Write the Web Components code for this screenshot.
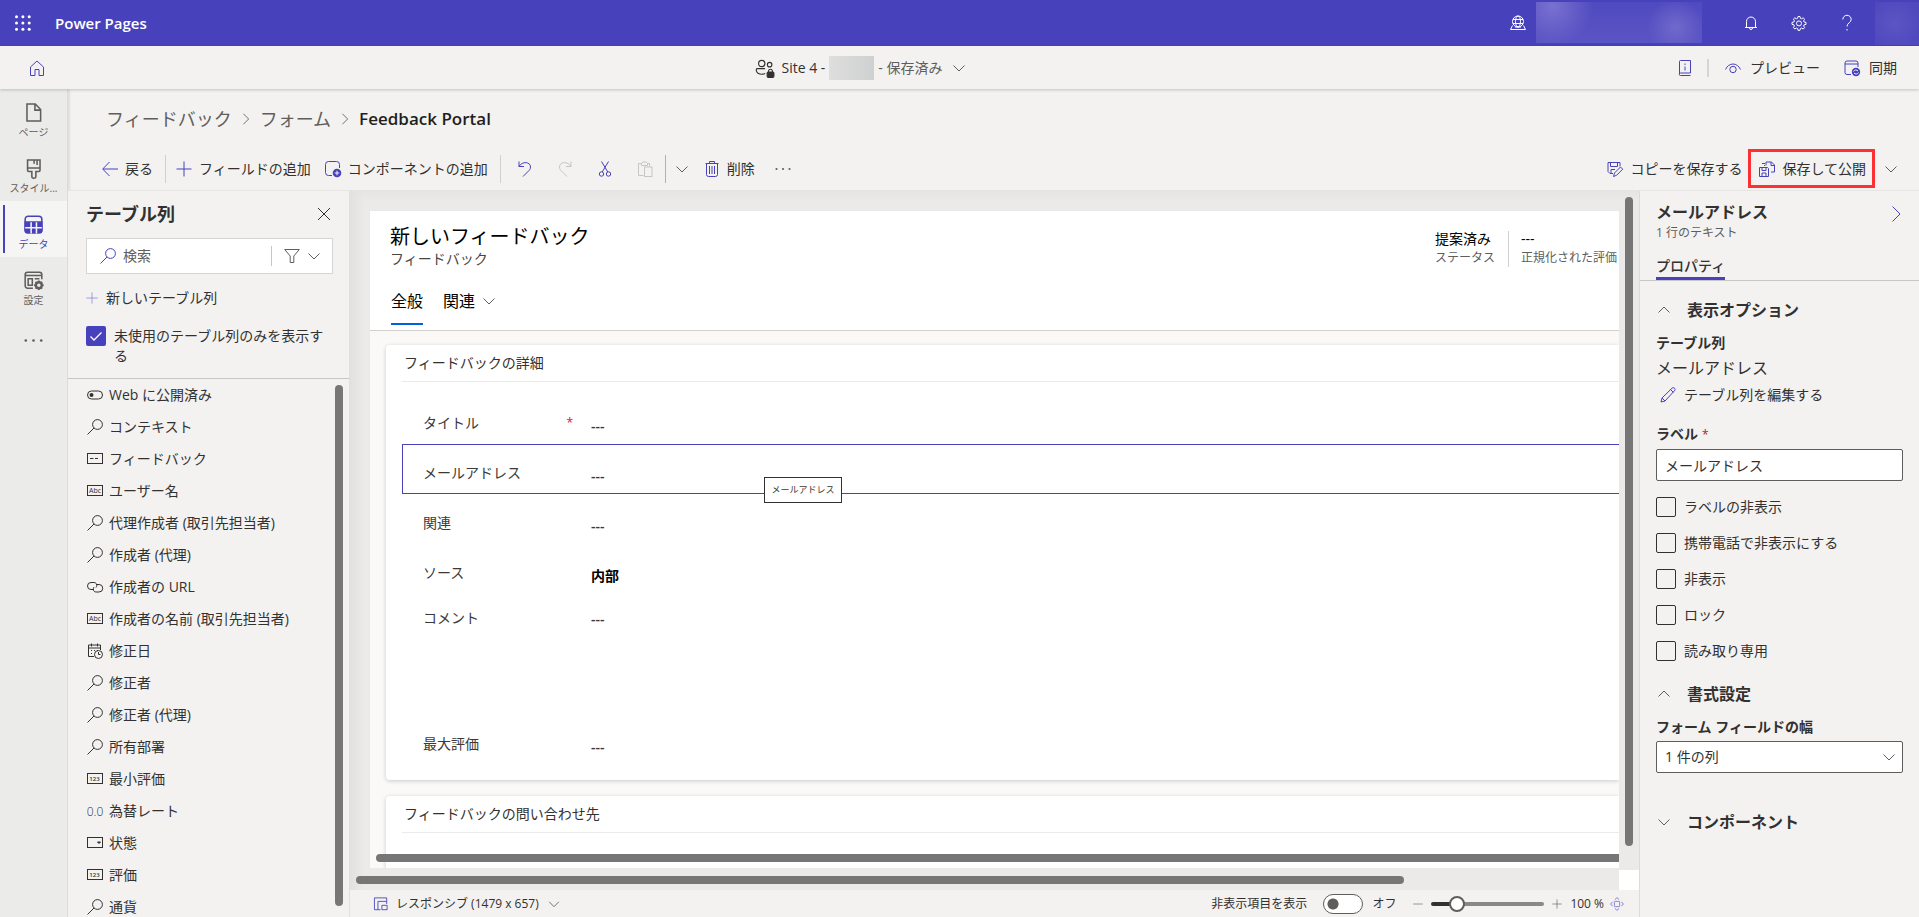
<!DOCTYPE html>
<html lang="ja">
<head>
<meta charset="utf-8">
<title>Power Pages</title>
<style>
html, body { margin: 0; height: 100%; }
body {
  --brand: #4742bc;
  --ink: #323130;
  --muted: #605e5c;
  --surface: #f3f2f1;
  --line: #c8c6c4;
  font-family: "Open Sans", "Noto Sans CJK JP", sans-serif;
  font-size: 14px;
  font-weight: 400;
  line-height: 20px;
  color: var(--ink);
  background: var(--surface);
  overflow: hidden;
}
</style>
</head>
<body>
<pp-app></pp-app>
<script>
const base = `
*, *::before, *::after { box-sizing: border-box; }
button, input, select { font: inherit; color: inherit; margin: 0; }
button { border: 0; background: none; padding: 0; display: flex; align-items: center; cursor: pointer; white-space: nowrap; }
h1, h2, h3, p, ul, dl, dd { margin: 0; padding: 0; font-size: inherit; font-weight: inherit; }
ul { list-style: none; }
a { color: inherit; text-decoration: none; }
`;

function define(name, css, html) {
  customElements.define(name, class extends HTMLElement {
    constructor() {
      super();
      const root = this.attachShadow({ mode: 'open' });
      const t = document.createElement('template');
      t.innerHTML = `<style>${base}${css}</style>` + (typeof html === 'function' ? html(this) : html);
      root.append(t.content.cloneNode(true));
    }
  });
}

const gearPath = 'M7 1.5h2l.4 1.8 1.2.5 1.6-1 1.4 1.4-1 1.6.5 1.2 1.9.4v2l-1.9.4-.5 1.2 1 1.6-1.4 1.4-1.6-1-1.2.5L9 15.3H7l-.4-1.8-1.2-.5-1.6 1-1.4-1.4 1-1.6-.5-1.2L1 9.4v-2L2.900 7l.5-1.200-1-1.600L3.800 2.800l1.600 1 1.200-.5z';
const icons = {
  waffle: '<g fill="currentColor" stroke="none"><circle cx="1.500" cy="1.800" r="1.500"/><circle cx="7.900" cy="1.800" r="1.500"/><circle cx="14.200" cy="1.800" r="1.500"/><circle cx="1.500" cy="8" r="1.500"/><circle cx="7.900" cy="8" r="1.500"/><circle cx="14.200" cy="8" r="1.500"/><circle cx="1.500" cy="14.200" r="1.500"/><circle cx="7.900" cy="14.200" r="1.500"/><circle cx="14.200" cy="14.200" r="1.500"/></g>',
  env: '<circle cx="8" cy="6.500" r="5.500"/><ellipse cx="8" cy="6.500" rx="2.500" ry="5.500"/><path d="M3 4.500h10M3 8.500h10M2.500 10.500l-2 4h15l-2-4M5 12h6"/>',
  bell: '<path d="M3.500 12V6.500a4.500 4.500 0 0 1 9 0V12M2 12.500h12M6.500 13a1.500 1.500 0 0 0 3 0"/>',
  gear: `<path d="${gearPath}"/><circle cx="8" cy="8.400" r="2.500"/>`,
  help: '<path d="M3.800 4.500a4.200 4.200 0 0 1 8.400 0c0 3-4.200 3.500-4.200 7M8 14v1.500"/>',
  home: '<path d="M1.500 7L8 1l6.500 6v8.500H10V9.500H6v6H1.500z"/>',
  people: '<circle cx="6" cy="4" r="2.800"/><path d="M9 8.500H2c-1.500 0-1.500 5 4 5 1.500 0 2.500-.3 3-.8"/><circle cx="13" cy="5" r="2"/><path d="M12 12v-1.500a1.800 1.800 0 0 1 3.500 0V12"/><rect x="10.800" y="11.500" width="6" height="4.800" rx="1" fill="currentColor"/>',
  chevdown: '<path d="M2.500 5.500L8 11l5.500-5.500"/>',
  chevup: '<path d="M2.500 10.500L8 5l5.500 5.500"/>',
  chevright: '<path d="M4.500 .5L12 8l-7.500 7.500"/>',
  crumb: '<path d="M5 2L11 8 5 14"/>',
  info: '<path d="M2.500 1.500a1 1 0 0 1 1-1h10v12.500h-10a1 1 0 0 0 0 2.500h10M2.500 1.500v12.500"/><path d="M8 3.500v1.500M8 6.500v4"/>',
  eye: '<path d="M.5 9.500c1.500-3.500 4.500-5.500 7.500-5.500s6 2 7.500 5.500"/><circle cx="8" cy="9.500" r="3.200"/>',
  sync: '<path d="M7 14.500H3a2 2 0 0 1-2-2V3a2 2 0 0 1 2-2h9a2 2 0 0 1 2 2v4M1 4h13"/><circle cx="12" cy="12" r="4.200" fill="currentColor" stroke="none"/><path d="M9.500 11.500c.8-1.800 3.200-2 4.500-.5M14.500 12.500c-.8 1.800-3.200 2-4.500.5" stroke="#f3f2f1"/>',
  back: '<path d="M16 8H1M7.500 1L.700 8l6.800 7"/>',
  plus: '<path d="M8 .5v15M.5 8h15"/>',
  minus: '<path d="M.5 8h15"/>',
  addcomp: '<path d="M7 14.500H3.500a3 3 0 0 1-3-3v-8a3 3 0 0 1 3-3h8a3 3 0 0 1 3 3V7"/><circle cx="12" cy="12" r="4.300" fill="currentColor" stroke="none"/><path d="M12 9.700v4.600M9.700 12h4.600" stroke="#f3f2f1"/>',
  undo: '<path d="M2 .5v5h5M2 5.500C5 0 13.500.5 13.500 6c0 2-1 3-2 4l-5.500 5.500"/>',
  redo: '<path d="M14 .5v5H9M14 5.500C11 0 2.500.5 2.500 6c0 2 1 3 2 4l5.500 5.500"/>',
  cut: '<path d="M4.500.500L10.800 11M11.500.500L5.200 11"/><circle cx="4.500" cy="13" r="2.200"/><circle cx="11.500" cy="13" r="2.200"/>',
  paste: '<path d="M6.500 14.500h-5V2.500H5M10 2.500h2.500v3M4.500 4.500v-2L6 1h3l1.500 1.500v2z"/><rect x="7.500" y="6" width="7.500" height="9.500"/>',
  trash: '<path d="M2.500 3v10.500a2 2 0 0 0 2 2h7a2 2 0 0 0 2-2V3M1.500 2.500h13M5.500 2.500v-2h5v2M5.500 5v8M8 5v8M10.500 5v8"/>',
  more: '<g fill="currentColor" stroke="none"><circle cx="1.500" cy="8" r="1.100"/><circle cx="8" cy="8" r="1.100"/><circle cx="14.500" cy="8" r="1.100"/></g>',
  savecopy: '<path d="M6 12.500H3L1 10.500v-9h12v4M3.500 1.500v4h7v-4M4 12.500v-4h4"/><path d="M6.500 15.500l1-3.500 6-6 2.200 2.200-6 6z"/>',
  publish: '<path d="M.5 6.500h8l1 1v8H.5zM3 6.500v3h4v-3M3 15.500v-3.500h4v3.500M7 4.500V1h5.500l3 3v7H12M12 1v3.500h3.500M3 2.500h3M5 4.500h1"/>',
  page: '<path d="M3 .8h6.500L14 5.500v9.700H2.500V.800zM9.200 1v5H14"/>',
  brush: '<path d="M3 .8h10.500v8.700c0 1-1 1-1 1H10v4a1.700 1.700 0 0 1-3.400 0v-4H4c-1 0-1-1-1-1zM3 7.500h10.500M8.500 1v3M11 1v4"/>',
  table: '<rect x="1" y="1" width="14" height="14" rx="2.500"/><path d="M1 6v7a2 2 0 0 0 2 2h10a2 2 0 0 0 2-2V6z" fill="currentColor"/><path d="M6 6v9.500M10.500 6v9.500M1 10.700h14" stroke="#f5f5f4"/>',
  sitegear: '<path d="M7.500 14.500H3a2 2 0 0 1-2-2V3a2 2 0 0 1 2-2h10a2 2 0 0 1 2 2v4M1 3.800h14M3.500 6.500H7v5.500H3.500zM9 6.500h4"/><circle cx="12.500" cy="12" r="2.500" stroke-width="2"/><path d="M12.500 8v1.500M12.500 14.500V16M8.500 12H10M15 12h1.500M9.700 9.200l1 1M14.300 13.800l1 1M15.300 9.200l-1 1M10.700 13.800l-1 1" stroke-width="1.500"/>',
  close: '<path d="M2 2l12 12M14 2L2 14"/>',
  search: '<circle cx="10.500" cy="5.500" r="4.900"/><path d="M7 9L.5 15.500"/>',
  filter: '<path d="M.7 1.500h14.600L9.800 8v6.500H6.200V8z"/>',
  toggle: '<rect x=".5" y="4" width="15" height="8" rx="4"/><circle cx="4.500" cy="8" r="2" fill="currentColor" stroke="none"/>',
  field: '<rect x=".5" y="2.500" width="15" height="10"/><path d="M3 7.500h3.500M8 7.500h3"/>',
  abc: '<rect x=".5" y="2.500" width="15" height="10"/><text x="8" y="10" font-size="7" text-anchor="middle" fill="currentColor" stroke="none">Abc</text>',
  num: '<rect x=".5" y="2.500" width="15" height="10"/><text x="7.500" y="10" font-size="6" font-weight="600" text-anchor="middle" fill="currentColor" stroke="none">123</text>',
  link: '<path d="M7 10.500H4a3.500 3.500 0 0 1 0-7h3c2.500 0 3.800 3 2 5M9 5.500h3a3.500 3.500 0 0 1 0 7.500H9C6.500 13 5.500 10 7 8"/>',
  date: '<path d="M7 13.500H1.500V2h12v5M1.500 5h12M4.500.500v3M10.500.500v3M4 7.500h1M7 7.500h1M4 10.500h1M10 7.500h1"/><circle cx="11.500" cy="11.500" r="4"/><path d="M11.500 9v2.500h2"/>',
  decimal: '<text x="8" y="13" font-size="12" font-weight="300" text-anchor="middle" fill="currentColor" stroke="none">0.0</text>',
  choice: '<rect x=".5" y="2.500" width="15" height="10"/><path d="M10.500 7h3L12 8.500z" fill="currentColor"/>',
  edit: '<path d="M1 15l1-4L12 1.200a1.500 1.500 0 0 1 2.500 2.500L5 14zM10.500 2.500L13.500 5.500M2 11l3 3"/>',
  responsive: '<path d="M7.500 14.500h-7V1h14v7M4.500 14.500V5h10M9 14.500v-5h6v5z"/>',
  fit: '<rect x="5" y="5" width="6" height="6" rx="1"/><path d="M5.500 3L8 .7 10.500 3M5.500 13L8 15.300l2.500-2.300M3 5.500L.7 8 3 10.500M13 5.500L15.300 8 13 10.500"/>'
};

define('pp-icon', `
:host { display: inline-flex; flex: none; width: 16px; height: 16px; }
svg { width: 100%; height: 100%; overflow: visible; fill: none; stroke: currentColor; stroke-width: var(--stroke, 1); }
`, el => `<svg viewBox="0 0 16 16" aria-hidden="true">${icons[el.getAttribute('name')]}</svg>`);

define('pp-header', `
:host { display: flex; align-items: center; height: 46px; background: var(--brand); color: #fff; padding-left: 15px; }
a { margin-left: 24px; font-size: 15px; font-weight: 600; flex: 1; }
.env { margin-right: 10px; }
.account { width: 166px; height: 41px; margin: 0 25px 2px 0;
  background: radial-gradient(circle at 10% 10%, #7a72d0 0, #7a72d000 26%), radial-gradient(circle at 84% 62%, #7069cc 0, #7069cc00 20%), linear-gradient(#504ac0, #5a54c4); }
button.tool { width: 48px; height: 46px; justify-content: center; }
.avatar { width: 44px; height: 43px; margin-left: 4px; background: radial-gradient(circle at 45% 50%, #5c55c3, #5049be 80%); }
`, `
<button aria-label="アプリ起動ツール"><pp-icon name="waffle"></pp-icon></button>
<a href="#">Power Pages</a>
<pp-icon class="env" name="env"></pp-icon>
<div class="account"></div>
<button class="tool" aria-label="通知"><pp-icon name="bell"></pp-icon></button>
<button class="tool" aria-label="設定"><pp-icon name="gear"></pp-icon></button>
<button class="tool" aria-label="ヘルプ"><pp-icon name="help"></pp-icon></button>
<div class="avatar"></div>
`);

define('pp-sitebar', `
:host { display: flex; align-items: center; justify-content: space-between; height: 43px; padding: 0 22px 0 29px; position: relative;
  background: var(--surface); box-shadow: 0 1px 3px #00000033; }
div, button { display: flex; align-items: center; }
.home, .tools pp-icon { color: var(--brand); }
.home { display: flex; }
.site { gap: 8px; }
.site pp-icon { width: 18px; height: 18px; }
.site .chev { width: 16px; height: 16px; color: var(--muted); }
.hidden { width: 45px; height: 24px; background: linear-gradient(90deg, #dededd, #cfd0d1); margin: 0 -4px; }
.state { color: var(--muted); }
.rule { width: 2px; height: 18px; background: #d6d5d4; margin: 0 16px 0 14px; }
.tools button { gap: 9px; }
.tools button + button { margin-left: 24px; }
`, `
<a class="home" href="#" aria-label="ホーム"><pp-icon name="home"></pp-icon></a>
<button class="site"><pp-icon name="people"></pp-icon><span>Site 4 -</span><span class="hidden"></span><span class="state">- 保存済み</span><pp-icon class="chev" name="chevdown"></pp-icon></button>
<div class="tools">
<button aria-label="情報"><pp-icon name="info"></pp-icon></button><span class="rule"></span>
<button><pp-icon name="eye"></pp-icon>プレビュー</button>
<button><pp-icon name="sync"></pp-icon>同期</button>
</div>
`);

define('pp-rail-item', `
:host { display: block; height: 56px; color: var(--muted); }
a { display: flex; flex-direction: column; align-items: center; height: 100%; padding: 14px 0 0; gap: 4px; font-size: 10px; line-height: 12px; position: relative; }
pp-icon { width: 19px; height: 19px; --stroke: 1.3; }
:host([current]) { background: #f5f5f4; color: var(--brand); }
:host([current]) a::before { content: ""; position: absolute; left: 3px; top: 4px; width: 2px; height: 48px; background: var(--brand); }
:host([more]) a { padding-top: 18px; }
`, el => `<a href="#"${el.hasAttribute('more') ? ' aria-label="その他"' : ''}><pp-icon name="${el.getAttribute('icon')}"></pp-icon><slot></slot></a>`);

define('pp-rail', `
:host { display: block; width: 68px; background: #ebebea; border-right: 1px solid #dcdbda; box-shadow: 1px 0 3px #00000022; }
`, `
<nav>
<pp-rail-item icon="page">ページ</pp-rail-item>
<pp-rail-item icon="brush">スタイル...</pp-rail-item>
<pp-rail-item icon="table" current>データ</pp-rail-item>
<pp-rail-item icon="sitegear">設定</pp-rail-item>
<pp-rail-item icon="more" more></pp-rail-item>
</nav>
`);

define('pp-breadcrumb', `
:host { display: block; height: 58px; padding: 1px 38px 0; }
nav { display: flex; align-items: center; height: 100%; font-size: 18px; color: var(--muted); gap: 7px; }
pp-icon { width: 14px; height: 14px; }
b { font-size: 17px; font-weight: 600; color: #201f1e; }
`, `
<nav aria-label="階層リンク"><a href="#">フィードバック</a><pp-icon name="crumb"></pp-icon><a href="#">フォーム</a><pp-icon name="crumb"></pp-icon><b>Feedback Portal</b></nav>
`);

define('pp-command', `
:host { display: flex; height: 28px; }
button { gap: 7px; }
pp-icon { color: var(--brand); }
:host([square]) { width: 40px; }
:host([narrow]) { width: 32px; }
:host([square]) button, :host([narrow]) button { width: 100%; justify-content: center; }
:host([narrow]) pp-icon { color: var(--muted); }
:host([disabled]) pp-icon { color: #c8c6c4; }
:host([dark]) pp-icon { color: var(--muted); }
:host([highlight]) { height: 39px; border: 3px solid #fd3034; padding: 0 6px 0 8px; }
`, el => `<button aria-label="${el.getAttribute('hint') || ''}"${el.hasAttribute('disabled') ? ' disabled' : ''}><pp-icon name="${el.getAttribute('icon')}"></pp-icon><slot></slot></button>`);

define('pp-toolbar', `
:host { display: flex; align-items: center; height: 44px; padding: 0 12px 0 34px; border-bottom: 1px solid #e6e5e4; }
i { width: 1px; height: 28px; background: #d2d0ce; margin: 0 10px 0 12px; }
i.group { margin-right: 4px; }
i.flush { margin: 0; background: #b3b0ad; }
.gap { margin-left: 14px; }
.trash { margin: 0 8px 0 6px; }
.fill { flex: 1; }
.copy { margin-right: 6px; }
`, `
<pp-command icon="back">戻る</pp-command><i></i>
<pp-command icon="plus">フィールドの追加</pp-command>
<pp-command class="gap" icon="addcomp">コンポーネントの追加</pp-command><i class="group"></i>
<pp-command square icon="undo" hint="元に戻す"></pp-command>
<pp-command square disabled icon="redo" hint="やり直し"></pp-command>
<pp-command square icon="cut" hint="切り取り"></pp-command>
<pp-command square disabled icon="paste" hint="貼り付け"></pp-command><i class="flush"></i>
<pp-command narrow icon="chevdown" hint="貼り付けオプション"></pp-command>
<pp-command class="trash" icon="trash">削除</pp-command>
<pp-command square dark icon="more" hint="その他"></pp-command>
<span class="fill"></span>
<pp-command class="copy" icon="savecopy">コピーを保存する</pp-command>
<pp-command highlight icon="publish">保存して公開</pp-command>
<pp-command narrow icon="chevdown" hint="保存オプション"></pp-command>
`);

define('pp-column-item', `
:host { display: flex; align-items: center; gap: 6px; height: 32px; padding-left: 19px; white-space: nowrap; }
`, el => `<pp-icon name="${el.getAttribute('icon')}"></pp-icon><span><slot></slot></span>`);

define('pp-columns', `
:host { display: flex; flex-direction: column; width: 282px; min-height: 0; border-right: 1px solid #e1dfdd; background: var(--surface); }
.top { padding: 13px 16px 12px 18px; border-bottom: 1px solid var(--line); }
header { display: flex; justify-content: space-between; align-items: center; }
h2 { font-size: 18px; font-weight: 700; line-height: 20px; }
header button { margin-right: 1px; }
.search { display: flex; align-items: center; height: 36px; margin: 14px 0; padding-left: 13px; border: 1px solid #d6d5d4; background: #fff; }
.search > pp-icon { color: var(--brand); }
.search input { flex: 1; min-width: 0; border: 0; padding: 0; margin-left: 7px; outline: 0; background: none; }
input::placeholder { color: var(--muted); opacity: 1; }
.search button { gap: 6px; height: 20px; border-left: 1px solid var(--line); padding: 0 10px 0 12px; color: var(--muted); }
.new { gap: 8px; color: var(--ink); }
.new pp-icon { width: 12px; height: 12px; color: #8783d3; }
label { display: flex; gap: 8px; margin-top: 18px; }
label input { appearance: none; flex: none; width: 20px; height: 20px; border-radius: 2px; background: var(--brand) url("data:image/svg+xml,%3Csvg xmlns='http://www.w3.org/2000/svg' viewBox='0 0 20 20' fill='none' stroke='white' stroke-width='1.3'%3E%3Cpath d='M4.500 10.500l3.500 3.500 7.500-7.500'/%3E%3C/svg%3E"); }
.list { position: relative; flex: 1; min-height: 0; overflow: hidden; }
.bar { position: absolute; right: 6px; top: 6px; bottom: 11px; width: 8px; border-radius: 4px; background: #797775; }
`, `
<div class="top">
<header><h2>テーブル列</h2><button aria-label="閉じる"><pp-icon name="close"></pp-icon></button></header>
<div class="search"><pp-icon name="search"></pp-icon><input type="text" aria-label="検索" placeholder="検索"><button aria-label="フィルター"><pp-icon name="filter"></pp-icon><pp-icon name="chevdown"></pp-icon></button></div>
<button class="new"><pp-icon name="plus"></pp-icon>新しいテーブル列</button>
<label><input type="checkbox" checked><span>未使用のテーブル列のみを表示する</span></label>
</div>
<div class="list">
<pp-column-item icon="toggle">Web に公開済み</pp-column-item>
<pp-column-item icon="search">コンテキスト</pp-column-item>
<pp-column-item icon="field">フィードバック</pp-column-item>
<pp-column-item icon="abc">ユーザー名</pp-column-item>
<pp-column-item icon="search">代理作成者 (取引先担当者)</pp-column-item>
<pp-column-item icon="search">作成者 (代理)</pp-column-item>
<pp-column-item icon="link">作成者の URL</pp-column-item>
<pp-column-item icon="abc">作成者の名前 (取引先担当者)</pp-column-item>
<pp-column-item icon="date">修正日</pp-column-item>
<pp-column-item icon="search">修正者</pp-column-item>
<pp-column-item icon="search">修正者 (代理)</pp-column-item>
<pp-column-item icon="search">所有部署</pp-column-item>
<pp-column-item icon="num">最小評価</pp-column-item>
<pp-column-item icon="decimal">為替レート</pp-column-item>
<pp-column-item icon="choice">状態</pp-column-item>
<pp-column-item icon="num">評価</pp-column-item>
<pp-column-item icon="search">通貨</pp-column-item>
<span class="bar"></span>
</div>
`);

define('pp-form-header', `
:host { display: block; background: #fff; border-bottom: 1px solid #d2d0ce; padding: 12px 2px 5px 20px; color: #000; white-space: nowrap; }
.row, .stats, nav { display: flex; }
.row { justify-content: space-between; align-items: flex-start; }
h1 { font-size: 20px; line-height: 28px; }
p { line-height: 16px; color: #484644; }
.stats { margin-top: 6px; }
.stats div { line-height: 20px; }
.stats div + div { border-left: 1px solid #d2d0ce; margin: 2px 0 0 13px; padding-left: 12px; }
.stats div + div b { margin-top: -2px; }
.stats b { display: block; font-weight: 400; }
.stats span { display: block; font-size: 12px; line-height: 18px; color: var(--muted); }
nav { gap: 20px; margin-top: 22px; font-size: 16px; line-height: 24px; }
nav a { display: flex; align-items: center; gap: 6px; padding-bottom: 10px; border-bottom: 2px solid transparent; margin-left: 1px; }
nav a[aria-current] { border-color: #0060df; }
nav a + a { margin-left: 0; }
nav pp-icon { color: var(--muted); }
`, `
<div class="row"><div><h1>新しいフィードバック</h1><p>フィードバック</p></div>
<div class="stats"><div><b>提案済み</b><span>ステータス</span></div><div><b>---</b><span>正規化された評価</span></div></div></div>
<nav><a href="#" aria-current="page">全般</a><a href="#">関連<pp-icon name="chevdown"></pp-icon></a></nav>
`);

define('pp-field', `
:host { display: flex; height: 50px; margin-left: 16px; padding: 19px 0 0 21px; color: #3b3a39; }
span { display: block; }
.label { display: flex; justify-content: space-between; width: 168px; padding-right: 18px; }
.label i { color: #e81123; font-style: normal; font-size: 12px; }
.value { font-weight: 600; padding-top: 3px; }
:host([filled]) .value { color: #000; font-weight: 700; }
:host([tall]) { height: 121px; padding-top: 14px; }
:host([tall]) .value { padding-top: 1px; }
:host([selected]) { border: 1px solid var(--brand); border-right: 0; padding: 18px 0 0 20px; position: relative; }
`, el => `<span class="label">${el.getAttribute('label')}${el.hasAttribute('required') ? '<i>*</i>' : ''}</span><span class="value"><slot>---</slot></span><slot name="tip"></slot>`);

define('pp-tooltip', `
:host { position: absolute; left: 361px; top: 32px; width: 78px; height: 26px; border: 1px solid #323130; background: #fff; font-size: 9px; line-height: 24px; text-align: center; z-index: 1; }
`, `<slot></slot>`);

define('pp-section', `
:host { display: block; background: #fff; border-radius: 4px 0 0 4px; box-shadow: 0 1px 4px #00000030; padding-bottom: 15px; }
h3 { height: 37px; line-height: 36px; margin-left: 16px; padding-left: 2px; border-bottom: 1px solid #edebe9; }
.body { padding-top: 12px; }
`, el => `<h3>${el.getAttribute('heading')}</h3><div class="body"><slot></slot></div>`);

define('pp-canvas', `
:host { display: block; position: relative; flex: 1; min-height: 0; padding: 20px 20px 22px 20px;
  background: linear-gradient(90deg, #e2e1e0, #edebea00 14px), linear-gradient(#e6e5e4, #edebea00 10px), #ebeae9; }
.form { position: relative; height: 100%; background: #faf9f8; overflow: hidden; }
.sections { display: flex; flex-direction: column; gap: 16px; padding: 14px 0 0 16px; }
.last { min-height: 90px; }
.bar { position: absolute; background: #767676; border-radius: 4px; }
.inner { left: 6px; right: 0; bottom: 6px; height: 8px; border-radius: 4px 0 0 4px; }
.across { left: 6px; right: 235px; bottom: 6px; height: 8px; }
.down { right: 6px; top: 6px; bottom: 44px; width: 8px; }
.corner { position: absolute; right: 0; bottom: 0; width: 20px; height: 20px; background: #fff; }
`, `
<div class="form">
<pp-form-header></pp-form-header>
<div class="sections">
<pp-section heading="フィードバックの詳細">
<pp-field label="タイトル" required></pp-field>
<pp-field label="メールアドレス" selected><pp-tooltip slot="tip">メールアドレス</pp-tooltip></pp-field>
<pp-field label="関連"></pp-field>
<pp-field label="ソース" filled>内部</pp-field>
<pp-field label="コメント" tall></pp-field>
<pp-field label="最大評価"></pp-field>
</pp-section>
<pp-section class="last" heading="フィードバックの問い合わせ先"></pp-section>
</div>
<span class="bar inner"></span>
</div>
<span class="bar across"></span><span class="bar down"></span><span class="corner"></span>
`);

define('pp-status', `
:host { display: flex; align-items: center; height: 27px; padding: 1px 15px 0 24px; background: var(--surface); font-size: 12px; white-space: nowrap; }
.size { gap: 8px; }
pp-icon { width: 14px; height: 14px; color: var(--muted); }
.size pp-icon:first-child, .fit pp-icon { color: var(--brand); }
.fill { flex: 1; }
label { display: flex; align-items: center; gap: 16px; }
.switch { appearance: none; width: 40px; height: 20px; border: 1px solid var(--muted); border-radius: 10px; background: radial-gradient(circle at 9px 9px, #605e5c 5px, #605e5c00 6px) #fff; }
output { margin: 0 17px 0 9px; width: 24px; }
.range { appearance: none; width: 113px; height: 16px; margin: 0 8px; background: none; }
.range::-webkit-slider-runnable-track { height: 4px; border-radius: 2px; background: linear-gradient(90deg, #323130 26px, #8a8886 26px); }
.range::-webkit-slider-thumb { appearance: none; width: 16px; height: 16px; margin-top: -6px; border: 2px solid #605e5c; border-radius: 8px; background: #fff; }
.pct { margin: 0 6px 0 8px; }
.zoom pp-icon { width: 10px; height: 10px; }
.fit pp-icon { color: #7773cd; }
`, `
<button class="size"><pp-icon name="responsive"></pp-icon>レスポンシブ (1479 x 657)<pp-icon name="chevdown"></pp-icon></button>
<span class="fill"></span>
<label>非表示項目を表示<input class="switch" type="checkbox" role="switch"></label><output>オフ</output>
<button class="zoom" aria-label="縮小"><pp-icon name="minus"></pp-icon></button>
<input class="range" type="range" aria-label="ズーム" min="0" max="1000" value="185">
<button class="zoom" aria-label="拡大"><pp-icon name="plus"></pp-icon></button>
<span class="pct">100 %</span>
<button class="fit" aria-label="画面に合わせる"><pp-icon name="fit"></pp-icon></button>
`);

define('pp-check', `
:host { display: block; margin-top: 16px; }
label { display: flex; gap: 8px; align-items: center; }
input { appearance: none; width: 20px; height: 20px; border: 1px solid var(--ink); border-radius: 2px; background: none; }
`, `<label><input type="checkbox"><span><slot></slot></span></label>`);

define('pp-group', `
:host { display: block; }
h3 button { gap: 15px; font-size: 16px; line-height: 24px; font-weight: 700; }
pp-icon { color: var(--muted); }
`, el => `<h3><button aria-expanded="${!el.hasAttribute('closed')}"><pp-icon name="${el.hasAttribute('closed') ? 'chevdown' : 'chevup'}"></pp-icon>${el.getAttribute('heading')}</button></h3><slot></slot>`);

define('pp-properties', `
:host { display: block; width: 280px; border-left: 1px solid #dcdbda; background: var(--surface); }
header { display: flex; justify-content: space-between; padding: 10px 15px 15px 16px; }
header button { color: var(--brand); height: 26px; }
h2 { font-size: 16px; line-height: 22px; font-weight: 700; }
header p { font-size: 12px; line-height: 16px; margin-top: 2px; color: var(--muted); }
nav { display: flex; padding: 0 16px; border-bottom: 1px solid var(--line); }
nav a { border-bottom: 3px solid var(--brand); font-weight: 500; padding-bottom: 1px; }
.content { padding: 17px 16px 0; }
.name, label { font-weight: 600; display: block; }
.name { margin-top: 11px; }
.value { font-size: 16px; margin: 5px 0 7px; }
.edit { gap: 8px; padding-left: 4px; }
.edit pp-icon { color: var(--brand); }
.text { margin-top: 19px; }
.text i { color: #a4262c; font-style: normal; font-weight: 400; font-size: 12px; margin-left: 4px; }
input, select { display: block; width: 100%; height: 32px; margin-top: 4px; padding: 0 8px; border: 1px solid #605e5c; border-radius: 2px; background: #fff; outline: 0; appearance: none; }
pp-group + pp-group { margin-top: 21px; }
.width { margin-top: 11px; }
.select { position: relative; }
.select pp-icon { position: absolute; right: 6px; top: 8px; color: var(--muted); }
pp-group.last { margin-top: 37px; }
`, `
<header><div><h2>メールアドレス</h2><p>1 行のテキスト</p></div><button aria-label="折りたたむ"><pp-icon name="chevright"></pp-icon></button></header>
<nav><a href="#" aria-current="page">プロパティ</a></nav>
<div class="content">
<pp-group heading="表示オプション">
<p class="name">テーブル列</p><p class="value">メールアドレス</p>
<button class="edit"><pp-icon name="edit"></pp-icon>テーブル列を編集する</button>
<label class="text" for="label">ラベル<i>*</i></label><input id="label" type="text" value="メールアドレス">
<pp-check>ラベルの非表示</pp-check><pp-check>携帯電話で非表示にする</pp-check><pp-check>非表示</pp-check><pp-check>ロック</pp-check><pp-check>読み取り専用</pp-check>
</pp-group>
<pp-group heading="書式設定">
<label class="width" for="width">フォーム フィールドの幅</label>
<div class="select"><select id="width"><option>1 件の列</option></select><pp-icon name="chevdown"></pp-icon></div>
</pp-group>
<pp-group class="last" heading="コンポーネント" closed></pp-group>
</div>
`);

define('pp-app', `
:host { display: flex; flex-direction: column; height: 100vh; }
.below { display: flex; flex: 1; min-height: 0; }
main { display: flex; flex-direction: column; flex: 1; min-width: 0; }
.work { display: flex; flex: 1; min-height: 0; }
.center { display: flex; flex-direction: column; flex: 1; min-width: 0; }
pp-sitebar { z-index: 1; }
`, `
<pp-header></pp-header>
<pp-sitebar></pp-sitebar>
<div class="below">
<pp-rail></pp-rail>
<main>
<pp-breadcrumb></pp-breadcrumb>
<pp-toolbar></pp-toolbar>
<div class="work">
<pp-columns></pp-columns>
<div class="center"><pp-canvas></pp-canvas><pp-status></pp-status></div>
<pp-properties></pp-properties>
</div>
</main>
</div>
`);
</script>
</body>
</html>
